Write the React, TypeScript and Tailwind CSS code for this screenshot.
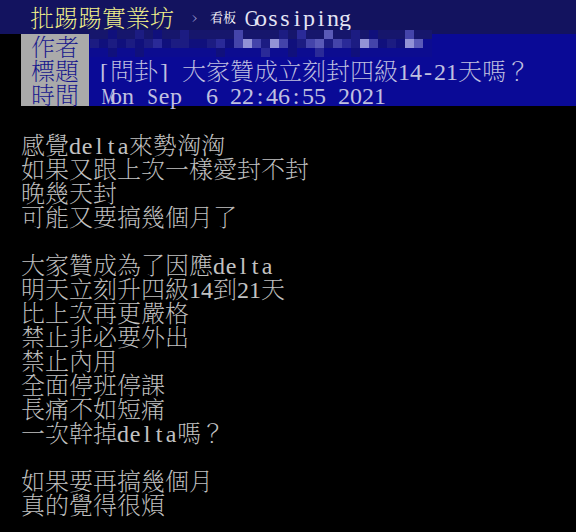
const mosaicColors: Record<string, string> = {
  a: "bg-[#0c0c90]",
  i: "bg-[#10107c]",
  b: "bg-[#16166c]",
  c: "bg-[#1c1c82]",
  d: "bg-[#2a2a98]",
  e: "bg-[#4444aa]",
  f: "bg-[#5a5ab8]",
  g: "bg-[#7474c4]",
  h: "bg-[#9292d6]",
};

const mosaicRows = [
  "bbibbcbibbcbbbbbebbbbcbdbbfbbcbibbbebb",
  "cicicicdicciicdiehecheicefcedcheicihfa",
  "aaiaaiaaaaaaaaiaaaadaaiaadaaaiaaaaaaaa",
];

const body = [
  "感覺delta來勢洶洶",
  "如果又跟上次一樣愛封不封",
  "晚幾天封",
  "可能又要搞幾個月了",
  "",
  "大家贊成為了因應delta",
  "明天立刻升四級14到21天",
  "比上次再更嚴格",
  "禁止非必要外出",
  "禁止內用",
  "全面停班停課",
  "長痛不如短痛",
  "一次幹掉delta嗎？",
  "",
  "如果要再搞幾個月",
  "真的覺得很煩",
];

function cellClass(ch: string) {
  if ("MWmw".includes(ch)) return "inline-block scale-x-[0.68]";
  if (/[A-Z]/.test(ch)) return "inline-block scale-x-[0.8]";
  return "inline-block";
}

// ASCII chars sit on a half-width grid (12px per char at 24px), like the terminal font
function Txt({ text }: { text: string }) {
  const parts = text.match(/[\x20-\x7e]+|[^\x20-\x7e]+/g) ?? [];
  return (
    <>
      {parts.map((p, i) =>
        /[\x20-\x7e]/.test(p[0]) ? (
          <span key={i} className="font-[family-name:'Liberation_Serif',serif] font-normal">
            {p.split("").map((ch, j) => (
              <span key={j} className="inline-block w-[12px] whitespace-pre text-center">
                <span className={cellClass(ch)}>{ch}</span>
              </span>
            ))}
          </span>
        ) : (
          <span key={i}>{p}</span>
        ),
      )}
    </>
  );
}

function MetaRow({ label, children }: { label: string; children?: React.ReactNode }) {
  return (
    <div className="flex h-[24px]">
      <div className="w-[68px] bg-[#aaaaaa] pl-[10px] text-[#16168c]">{label}</div>
      <div className="flex-1 whitespace-pre bg-[#0a0a96] pl-[9px] text-[#c0c0e0]">{children}</div>
    </div>
  );
}

export default function App() {
  return (
    <div className="h-[532px] w-[576px] overflow-hidden bg-black font-[family-name:'Noto_Serif_CJK_TC','Noto_Sans_CJK_TC','Noto_Sans_CJK_JP',sans-serif] font-extralight text-[24px] leading-[24px]">
      <div className="flex h-[34px] items-center bg-[#13135f] pl-[30px]">
        <span className="text-[#f2f28a]">批踢踢實業坊</span>
        <span className="ml-[18px] text-[16px] text-[#9a9ad2]">›</span>
        <span className="ml-[13px] text-[13px] font-normal text-white">看板</span>
        <span className="ml-[7px] text-[#e4e4f4]">
          <Txt text="Gossiping" />
        </span>
      </div>

      <div className="relative pl-[21px]">
        <MetaRow label="作者" />
        <MetaRow label="標題">
          <Txt text="[問卦] 大家贊成立刻封四級14-21天嗎？" />
        </MetaRow>
        <MetaRow label="時間">
          <Txt text="Mon Sep  6 22:46:55 2021" />
        </MetaRow>

        <div className="absolute left-[90px] top-[-4px] flex flex-col">
          {mosaicRows.map((row, r) => (
            <div key={r} className="flex">
              {row.split("").map((k, c) => (
                <div key={c} className={`h-[9px] w-[9px] ${mosaicColors[k]}`} />
              ))}
            </div>
          ))}
        </div>
      </div>

      <div className="pl-[21px] pt-[26px] text-[#c2c2c2]">
        {body.map((line, i) => (
          <div key={i} className="h-[24px] whitespace-pre">
            <Txt text={line} />
          </div>
        ))}
      </div>
    </div>
  );
}
